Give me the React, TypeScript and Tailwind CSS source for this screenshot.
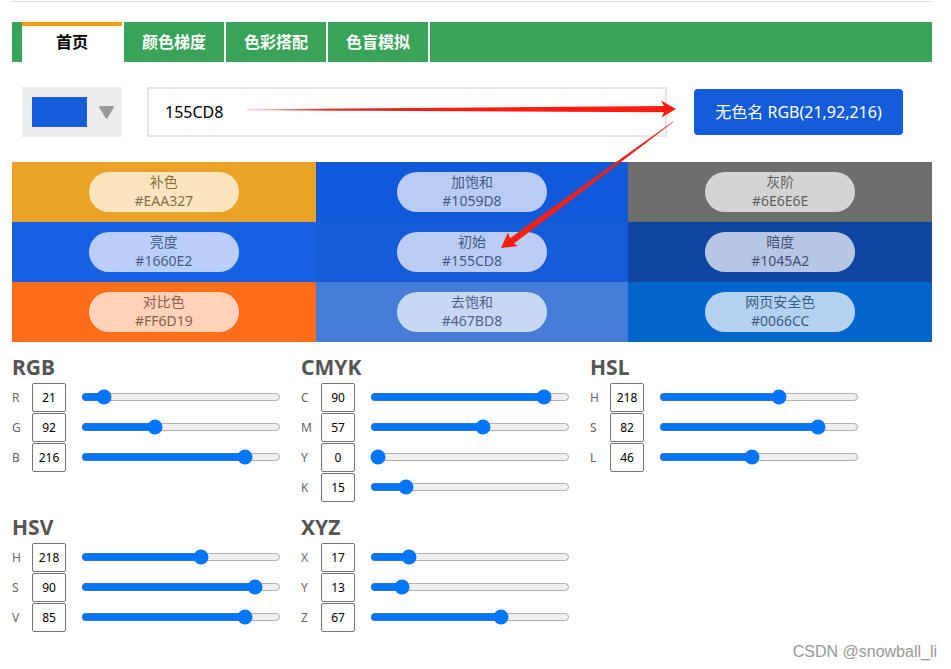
import { useState } from "react";

const tabs = ["首页", "颜色梯度", "色彩搭配", "色盲模拟"];

const swatches = [
  { name: "补色", hex: "#EAA327", bg: "bg-[#eaa327]", ink: "text-[#8a6f41]", pill: "bg-[#fbe5bf]" },
  { name: "加饱和", hex: "#1059D8", bg: "bg-[#1059d8]", ink: "text-[#42598a]", pill: "bg-[#b9cdf4]" },
  { name: "灰阶", hex: "#6E6E6E", bg: "bg-[#6e6e6e]", ink: "text-[#5f5f5f]", pill: "bg-[#d4d4d4]" },
  { name: "亮度", hex: "#1660E2", bg: "bg-[#1660e2]", ink: "text-[#435b8d]", pill: "bg-[#bacff7]" },
  { name: "初始", hex: "#155CD8", bg: "bg-[#155cd8]", ink: "text-[#435a8a]", pill: "bg-[#b9cdf4]" },
  { name: "暗度", hex: "#1045A2", bg: "bg-[#1045a2]", ink: "text-[#42527a]", pill: "bg-[#b7c7e3]" },
  { name: "对比色", hex: "#FF6D19", bg: "bg-[#ff6d19]", ink: "text-[#905f45]", pill: "bg-[#ffd2b9]" },
  { name: "去饱和", hex: "#467BD8", bg: "bg-[#467bd8]", ink: "text-[#51638a]", pill: "bg-[#c8d7f3]" },
  { name: "网页安全色", hex: "#0066CC", bg: "bg-[#0066cc]", ink: "text-[#3d5d87]", pill: "bg-[#b3d1f0]" },
];

type Channel = { label: string; value: number; max: number };

const models: { title: string; channels: Channel[] }[] = [
  {
    title: "RGB",
    channels: [
      { label: "R", value: 21, max: 255 },
      { label: "G", value: 92, max: 255 },
      { label: "B", value: 216, max: 255 },
    ],
  },
  {
    title: "CMYK",
    channels: [
      { label: "C", value: 90, max: 100 },
      { label: "M", value: 57, max: 100 },
      { label: "Y", value: 0, max: 100 },
      { label: "K", value: 15, max: 100 },
    ],
  },
  {
    title: "HSL",
    channels: [
      { label: "H", value: 218, max: 359 },
      { label: "S", value: 82, max: 100 },
      { label: "L", value: 46, max: 100 },
    ],
  },
  {
    title: "HSV",
    channels: [
      { label: "H", value: 218, max: 359 },
      { label: "S", value: 90, max: 100 },
      { label: "V", value: 85, max: 100 },
    ],
  },
  {
    title: "XYZ",
    channels: [
      { label: "X", value: 17, max: 100 },
      { label: "Y", value: 13, max: 100 },
      { label: "Z", value: 67, max: 100 },
    ],
  },
];

function ChannelRow({ model, channel }: { model: string; channel: Channel }) {
  const [value, setValue] = useState(channel.value);
  const id = `${model}-${channel.label}`;
  return (
    <div className="flex h-[30px] items-center">
      <label htmlFor={id} className="w-5 pt-0.5 text-xs text-[#666]">
        {channel.label}
      </label>
      <input
        id={id}
        type="text"
        value={value}
        onChange={(e) => setValue(Number(e.target.value) || 0)}
        className="h-[29px] w-[34px] rounded-[2px] border border-[#767676] bg-white text-center text-xs text-black"
      />
      <input
        type="range"
        aria-label={`${model} ${channel.label}`}
        min={0}
        max={channel.max}
        value={value}
        onChange={(e) => setValue(Number(e.target.value))}
        className="ml-[15px] w-[200px]"
      />
    </div>
  );
}

function Arrows() {
  return (
    <svg
      className="pointer-events-none absolute top-[95px] left-[240px]"
      width="450"
      height="160"
      viewBox="240 95 450 160"
      aria-hidden="true"
    >
      <defs>
        <linearGradient id="fadeRight" gradientUnits="userSpaceOnUse" x1="246" y1="0" x2="520" y2="0">
          <stop offset="0" stopColor="#e02a20" stopOpacity="0.2" />
          <stop offset="0.3" stopColor="#d8281e" />
          <stop offset="1" stopColor="#ff1d12" />
        </linearGradient>
        <linearGradient id="fadeDown" gradientUnits="userSpaceOnUse" x1="673" y1="122" x2="560" y2="205">
          <stop offset="0" stopColor="#e02a20" stopOpacity="0.7" />
          <stop offset="0.25" stopColor="#dc2a20" />
          <stop offset="1" stopColor="#ff1d12" />
        </linearGradient>
      </defs>
      <path d="M246 109.2 L664 106 L661 100.5 L676 109 L661.5 117.5 L664 112.3 L246 110.2 Z" fill="url(#fadeRight)" />
      <path d="M673.3 122.2 L514 243.5 L518 246 L501 248 L508 232.5 L510 238.3 L672.7 121.4 Z" fill="url(#fadeDown)" />
    </svg>
  );
}

export default function App() {
  const [color, setColor] = useState("155CD8");
  return (
    <div className="relative bg-white pr-[19px] pl-3 font-['Noto_Sans','Noto_Sans_CJK_SC',sans-serif]">
      <div className="mb-5 h-0.5 border-b border-l border-[#e2e2e2]" />

      <nav className="flex h-10 bg-[#3aa35a] pl-2.5 text-base font-bold">
        {tabs.map((tab, i) => (
          <a
            key={tab}
            href="#"
            className={
              i === 0
                ? "flex w-[102px] items-center justify-center border-r-2 border-white bg-white text-black shadow-[inset_0_4px_0_#ff9c0a]"
                : "flex w-[102px] items-center justify-center border-r-2 border-white text-white"
            }
          >
            {tab}
          </a>
        ))}
      </nav>

      <div className="mt-[25px] mr-[29px] ml-2.5 flex items-center">
        <button
          type="button"
          aria-label="选择颜色"
          className="flex h-[50px] w-[100px] items-center justify-between bg-[#eee] pr-2 pl-2.5"
        >
          <span className="h-[30px] w-[55px] bg-[#155cd8]" />
          <svg width="15" height="13" viewBox="0 0 15 13" aria-hidden="true">
            <path d="M1 0h13q1.5 0 .7 1.5L8.5 12q-1 1.5-2 0L.3 1.5Q-.5 0 1 0Z" fill="#999" />
          </svg>
        </button>
        <input
          type="text"
          aria-label="颜色值"
          value={color}
          onChange={(e) => setColor(e.target.value)}
          className="ml-[25px] h-[50px] min-w-0 flex-1 border-2 border-[#e5e5e5] px-4 text-base text-black"
        />
        <button
          type="button"
          className="ml-[27px] h-[46px] w-[209px] rounded bg-[#155cd8] text-base whitespace-nowrap text-white"
        >
          无色名 RGB(21,92,216)
        </button>
      </div>

      <div className="mt-[25px] grid grid-cols-[33fr_34fr_33fr]">
        {swatches.map((s) => (
          <div key={s.hex} className={`flex h-[60px] items-center justify-center ${s.bg}`}>
            <div
              className={`flex h-10 w-[150px] flex-col items-center rounded-[20px] text-sm leading-[19px] ${s.pill} ${s.ink}`}
            >
              <span>{s.name}</span>
              <span>{s.hex}</span>
            </div>
          </div>
        ))}
      </div>

      <div className="mt-2.5 flex flex-wrap gap-y-2.5">
        {models.map((m) => (
          <section key={m.title} className="w-[289px]">
            <h2 className="h-[30px] text-[21px] leading-[30px] font-bold text-[#555]">{m.title}</h2>
            {m.channels.map((c) => (
              <ChannelRow key={c.label} model={m.title} channel={c} />
            ))}
          </section>
        ))}
      </div>

      <footer className="-mr-[5px] mt-2 text-right font-['Liberation_Sans',Arial,sans-serif] text-base leading-6 text-[#999]">
        CSDN @snowball_li
      </footer>

      <Arrows />
    </div>
  );
}
